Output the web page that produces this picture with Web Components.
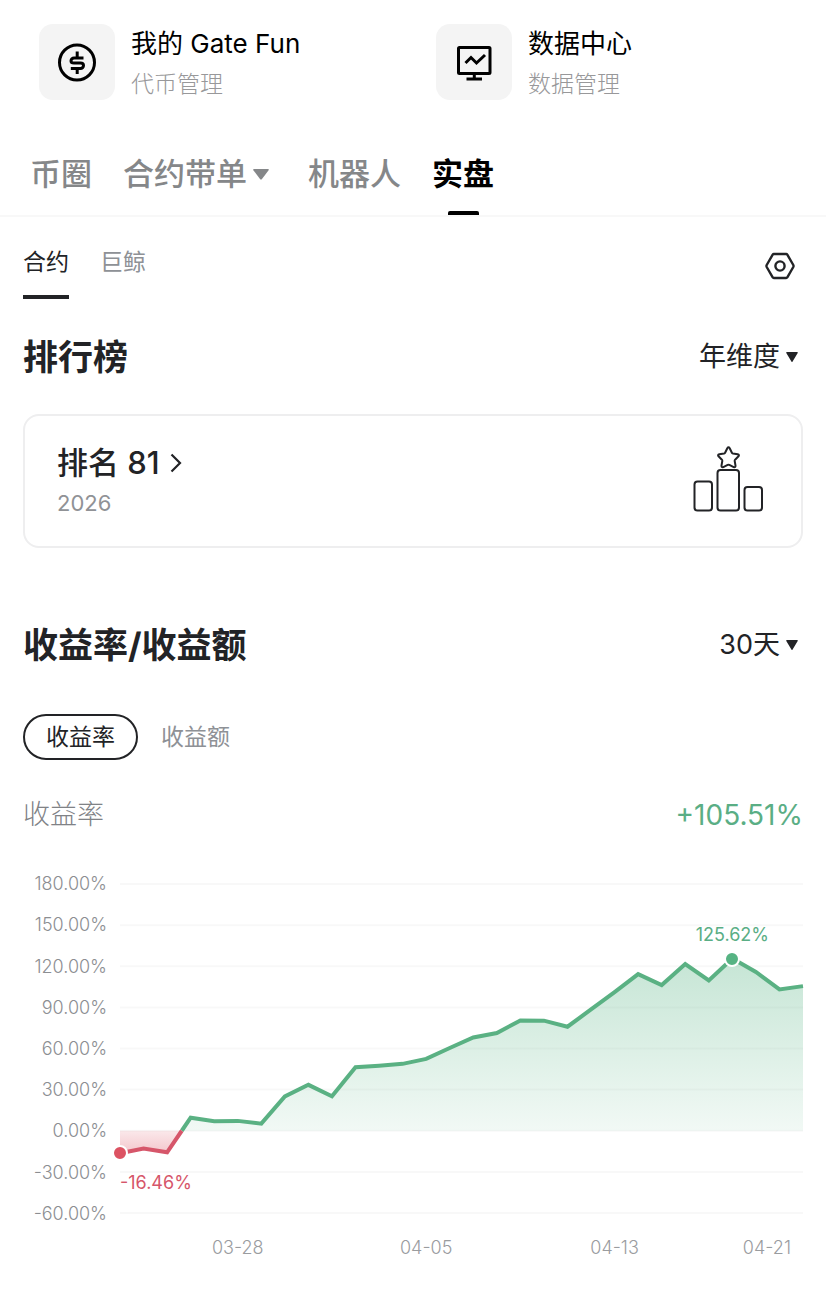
<!DOCTYPE html>
<html lang="zh-CN">
    <head>

        <meta charset="utf-8">
        <meta name="viewport" content="width=device-width, initial-scale=1">
        <title>实盘</title>

        <style>
            body {
                margin: 0;
                background: #fff;
                color: #222326;
                font-family: Inter, "Noto Sans CJK SC", sans-serif;
            }
            .entries {
                display: grid;
                grid-template-columns: 1fr 1fr;
                gap: 16px;
                padding: 24px 24px 0;
            }
            .main-tabs {
                margin-top: 50px;
            }
            .content {
                padding: 29px 23px 40px;
            }
            .toolbar {
                display: flex;
                justify-content: space-between;
                align-items: flex-start;
                margin-bottom: 34px;
            }
            rank-card {
                margin: 33px 0 73px;
            }
            .pills {
                display: flex;
                margin-top: 45px;
            }
            .summary {
                margin: 35px 0 28px;
            }
        </style>

    </head>

    <body>

        <div class="entries">
            <entry-link>
                <svg slot="icon" width="40" height="40" viewBox="0 0 40 40" fill="none" stroke="#000" stroke-width="3">
                    <circle cx="20" cy="20.500" r="17.500"></circle>
                    <path d="M26.500 16H17a3 3 0 0 0-3 3c0 1.200 1 2 3 2h6.500c2 0 3 .8 3 2.500a3 3 0 0 1-3 3H13.800M20.200 9.500v6M20.200 26.500v5.500"></path>
                </svg>
                我的 Gate Fun
                <span slot="note">代币管理</span>
            </entry-link>
            <entry-link>
                <svg slot="icon" width="40" height="40" viewBox="0 0 40 40" fill="none" stroke="#000" stroke-width="3">
                    <rect x="4.500" y="5.500" width="31.500" height="26" rx="1"></rect>
                    <path d="M11.500 21l5.500-5.500 5.500 5.500 8.500-8M20.300 32v5M12.500 37h15.500"></path>
                </svg>
                数据中心
                <span slot="note">数据管理</span>
            </entry-link>
        </div>

        <main-tabs class="main-tabs">
            <main-tab>币圈</main-tab>
            <main-tab menu>合约带单</main-tab>
            <main-tab>机器人</main-tab>
            <main-tab selected>实盘</main-tab>
        </main-tabs>

        <div class="content">

            <div class="toolbar">
                <sub-tabs tab-values="合约, 巨鲸"></sub-tabs>
                <settings-button></settings-button>
            </div>

            <section-head option-values="年维度, 月维度, 周维度">排行榜</section-head>

            <rank-card>
                排名 81
                <span slot="note">2026</span>
            </rank-card>

            <section-head option-values="30天, 7天, 90天">收益率/收益额</section-head>

            <div class="pills">
                <pill-button selected>收益率</pill-button>
                <pill-button>收益额</pill-button>
            </div>

            <stat-row class="summary">
                收益率
                <span slot="value">+105.51%</span>
            </stat-row>

            <profit-chart
                values="-16.46,-13,-15.7,9.5,7,7.2,5.2,25,33.5,25.2,46.3,47.5,48.8,52.4,60.4,68,71.3,80.4,80.3,75.9,88.5,101.2,114.3,106.3,121.6,109.7,125.62,115.8,103.1,105.51"
                dates="03-28,04-05,04-13,04-21"
                max="180" min="-60" step="30"></profit-chart>

        </div>

        <!-- - - - - - - - - - - - - - - - - - - - - - - - - -->

        <template id="entry-link-template">
            <a href="#">
                <span class="icon"><slot name="icon"></slot></span>
                <span class="text">
                    <span class="title"><slot></slot></span>
                    <span class="note"><slot name="note"></slot></span>
                </span>
            </a>
            <style>
                :host {
                    display: block;
                }
                a {
                    display: flex;
                    gap: 16px;
                    padding: 0 15px;
                    color: #000;
                    text-decoration: none;
                }
                .icon {
                    display: flex;
                    align-items: center;
                    justify-content: center;
                    width: 76px;
                    height: 76px;
                    border-radius: 14px;
                    background: #f4f4f4;
                }
                .text {
                    display: flex;
                    flex-direction: column;
                    line-height: 40px;
                }
                .title {
                    font-size: 26px;
                }
                .note {
                    font-size: 23px;
                    font-weight: 300;
                    color: #98989a;
                }
            </style>
        </template>

        <template id="main-tabs-template">
            <nav><slot></slot></nav>
            <style>
                :host {
                    display: block;
                    border-bottom: 2px solid #f8f8f8;
                }
                nav {
                    display: flex;
                    gap: 31px;
                    padding: 0 30px;
                }
            </style>
        </template>

        <template id="main-tab-template">
            <button type="button">
                <span class="label">
                    <slot></slot>
                    <svg width="16" height="11" viewBox="0 0 16 11"><path d="M1 0h14q1.500 0 .6 1.200L9 10q-1 1-2 0L.4 1.200Q-.5 0 1 0z" fill="#858789"></path></svg>
                </span>
                <span class="bar"></span>
            </button>
            <style>
                :host {
                    display: block;
                }
                button {
                    display: flex;
                    flex-direction: column;
                    align-items: center;
                    gap: 17px;
                    padding: 0;
                    border: none;
                    background: none;
                    font: inherit;
                    font-size: 31px;
                    font-weight: 500;
                    line-height: 40px;
                    color: #858789;
                    cursor: pointer;
                }
                .label {
                    display: flex;
                    align-items: center;
                }
                svg {
                    display: none;
                    margin: 0 8px 0 6px;
                }
                .bar {
                    width: 31px;
                    height: 4px;
                    border-radius: 2px 2px 0 0;
                }
                :host([menu]) svg {
                    display: block;
                }
                :host([selected]) button {
                    color: #000;
                    font-weight: 700;
                }
                :host([selected]) .bar {
                    background: #000;
                }
            </style>
        </template>

        <template id="sub-tabs-template">
            <nav></nav>
            <style>
                :host {
                    display: block;
                }
                nav {
                    display: flex;
                    gap: 31px;
                }
                button {
                    padding: 0 0 17px;
                    border: none;
                    border-bottom: 4px solid transparent;
                    background: none;
                    font: inherit;
                    font-size: 23px;
                    line-height: 32px;
                    color: #8e9196;
                    cursor: pointer;
                }
                button.selected {
                    border-color: #222326;
                    color: #222326;
                }
            </style>
        </template>

        <template id="settings-button-template">
            <button type="button" aria-label="设置">
                <svg width="32" height="32" viewBox="0 0 32 32" fill="none" stroke="#222326" stroke-width="2.400" stroke-linejoin="round">
                    <path d="M9.800 4h12.400q.7 0 1.100.6l6 10.400q.5 1 0 2l-6 10.400q-.4.6-1.100.6H9.800q-.7 0-1.100-.6l-6-10.400q-.5-1 0-2l6-10.400q.4-.6 1.100-.6z"></path>
                    <circle cx="16" cy="16" r="4.600"></circle>
                </svg>
            </button>
            <style>
                :host {
                    display: block;
                }
                button {
                    display: block;
                    padding: 4px 7px;
                    border: none;
                    background: none;
                    cursor: pointer;
                }
                svg {
                    display: block;
                }
            </style>
        </template>

        <template id="section-head-template">
            <h2><slot></slot></h2>
            <label>
                <select aria-label="时间范围"></select>
                <svg width="12" height="10" viewBox="0 0 12 10"><path d="M.8 0h10.400q1 0 .5 1L6.600 9.400q-.6 1-1.200 0L.3 1Q-.2 0 .8 0z" fill="#222326"></path></svg>
            </label>
            <style>
                :host {
                    display: flex;
                    justify-content: space-between;
                    align-items: center;
                }
                h2 {
                    margin: 0;
                    font-size: 35px;
                    font-weight: 700;
                    line-height: 48px;
                }
                label {
                    display: grid;
                    align-items: center;
                    justify-items: end;
                    padding-right: 5px;
                }
                select, svg {
                    grid-area: 1 / 1;
                }
                svg {
                    pointer-events: none;
                }
                select {
                    appearance: none;
                    field-sizing: content;
                    padding: 0 18px 0 0;
                    border: none;
                    background: none;
                    font: inherit;
                    font-size: 27px;
                    line-height: 40px;
                    color: inherit;
                    cursor: pointer;
                }
            </style>
        </template>

        <template id="rank-card-template">
            <a href="#">
                <span class="text">
                    <span class="title">
                        <slot></slot>
                        <svg width="12" height="20" viewBox="0 0 12 20" fill="none" stroke="#222326" stroke-width="2.200"><path d="M1.500 1.500L10 10l-8.500 8.500"></path></svg>
                    </span>
                    <span class="note"><slot name="note"></slot></span>
                </span>
                <svg class="podium" width="72" height="68" viewBox="0 0 72 68" fill="none" stroke="#222326" stroke-width="2" stroke-linejoin="round">
                    <path d="M34.300 3.200q1.200-2 2.400 0l2.200 4.500q.3.600 1 .8l4.800.8q2 .5.800 2l-3.400 3.500q-.5.500-.4 1.200l.8 4.700q.1 2-1.800 1.400l-4.400-2.200q-.8-.4-1.600 0l-4.400 2.200q-1.900.600-1.800-1.400l.8-4.700q.1-.7-.4-1.200L25.500 11.300q-1.200-1.500.8-2l4.800-.8q.7-.2 1-.8z"></path>
                    <rect x="1.500" y="36.500" width="17.500" height="29" rx="3"></rect>
                    <rect x="24.500" y="25" width="21.500" height="40.500" rx="3"></rect>
                    <rect x="51.500" y="42" width="17.500" height="23.500" rx="3"></rect>
                </svg>
            </a>
            <style>
                :host {
                    display: block;
                }
                a {
                    display: flex;
                    justify-content: space-between;
                    align-items: flex-start;
                    padding: 27px 36px 23px 32px;
                    border: 2px solid #eeeeef;
                    border-radius: 16px;
                    color: inherit;
                    text-decoration: none;
                }
                .text {
                    display: flex;
                    flex-direction: column;
                    line-height: 40px;
                }
                .title {
                    display: flex;
                    align-items: center;
                    gap: 10px;
                    font-size: 31px;
                    font-weight: 500;
                }
                .note {
                    font-size: 22px;
                    color: #909296;
                }
                .podium {
                    margin-top: 2px;
                }
            </style>
        </template>

        <template id="pill-button-template">
            <button type="button"><slot></slot></button>
            <style>
                :host {
                    display: block;
                }
                button {
                    padding: 0 21px;
                    border: 2px solid transparent;
                    border-radius: 23px;
                    background: none;
                    font: inherit;
                    font-size: 23px;
                    line-height: 42px;
                    color: #8e9196;
                    cursor: pointer;
                }
                :host([selected]) button {
                    border-color: #222326;
                    color: #222326;
                }
            </style>
        </template>

        <template id="stat-row-template">
            <span class="name"><slot></slot></span>
            <span class="value"><slot name="value"></slot></span>
            <style>
                :host {
                    display: flex;
                    justify-content: space-between;
                    font-size: 27px;
                    line-height: 40px;
                }
                .name {
                    font-weight: 300;
                    color: #808286;
                }
                .value {
                    font-size: 28px;
                    color: #5aae85;
                }
            </style>
        </template>

        <template id="profit-chart-template">
            <div class="y-axis"></div>
            <div class="plot">
                <svg preserveAspectRatio="none">
                    <defs>
                        <linearGradient id="gain" x1="0" y1="0" x2="0" y2="1">
                            <stop offset="0" stop-color="#56b383" stop-opacity=".34"></stop>
                            <stop offset="1" stop-color="#56b383" stop-opacity=".08"></stop>
                        </linearGradient>
                        <linearGradient id="loss" x1="0" y1="0" x2="0" y2="1">
                            <stop offset="0" stop-color="#dc4f60" stop-opacity=".13"></stop>
                            <stop offset="1" stop-color="#dc4f60" stop-opacity=".32"></stop>
                        </linearGradient>
                    </defs>
                    <g class="grid"></g>
                    <path class="gain-area" fill="url(#gain)"></path>
                    <path class="loss-area" fill="url(#loss)"></path>
                    <path class="line gain-line"></path>
                    <path class="line loss-line"></path>
                </svg>
                <span class="dot high"></span>
                <span class="tip high"></span>
                <span class="dot low"></span>
                <span class="tip low"></span>
            </div>
            <div class="x-axis"></div>
            <style>
                :host {
                    display: grid;
                    grid-template-columns: 84px 1fr;
                    grid-template-rows: 371px 28px;
                    column-gap: 13px;
                    font-size: 18px;
                    font-weight: 300;
                    color: #8c8e92;
                }
                .y-axis {
                    display: grid;
                    grid-auto-rows: 1fr;
                    align-items: center;
                    text-align: right;
                }
                .plot {
                    position: relative;
                    margin: 21px 0;
                }
                svg {
                    display: block;
                    width: 100%;
                    height: 100%;
                    overflow: visible;
                }
                .grid line {
                    stroke: #000;
                    stroke-opacity: .026;
                    stroke-width: 2px;
                    vector-effect: non-scaling-stroke;
                }
                .line {
                    fill: none;
                    stroke-width: 4px;
                    vector-effect: non-scaling-stroke;
                }
                .gain-line {
                    stroke: #5ab183;
                }
                .loss-line {
                    stroke: #d6566a;
                }
                /* the markers lie over the plot */
                .dot {
                    position: absolute;
                    width: 12px;
                    height: 12px;
                    border: 2px solid #fff;
                    border-radius: 50%;
                    transform: translate(-50%, -50%);
                }
                .dot.high {
                    background: #56b383;
                }
                .dot.low {
                    background: #dc5262;
                }
                .tip {
                    position: absolute;
                    line-height: 24px;
                    font-weight: 400;
                }
                .tip.high {
                    color: #5aae85;
                    transform: translate(-50%, -36px);
                }
                .tip.low {
                    color: #d6566a;
                    transform: translateY(18px);
                }
                .x-axis {
                    grid-column: 2;
                    display: grid;
                    grid-template-columns: 1fr 8fr 8fr 8fr 4fr;
                    line-height: 28px;
                    text-align: center;
                    color: #9a9c9f;
                }
                .x-axis span:first-child {
                    grid-column: 2;
                }
                .x-axis span:last-child {
                    padding-right: 12px;
                    text-align: right;
                }
            </style>
        </template>

        <script>

            class TemplateElement extends HTMLElement {

                constructor() {
                    super()

                    var shadow = this.shadow = this.attachShadow({mode: 'open'})
                    var template = document.getElementById(this.localName + '-template')
                    shadow.appendChild(template.content.cloneNode(true))
                }

            }

            class EntryLink extends TemplateElement {}
            class MainTabs extends TemplateElement {}
            class SettingsButton extends TemplateElement {}
            class RankCard extends TemplateElement {}
            class StatRow extends TemplateElement {}

            class MainTab extends TemplateElement {

                constructor() {
                    super()
                    this.addEventListener("click", () => selectOnly(this))
                }

            }

            class PillButton extends TemplateElement {

                constructor() {
                    super()
                    this.addEventListener("click", () => selectOnly(this))
                }

            }

            // moves the selected attribute to this node from its siblings
            function selectOnly(node) {
                Array.from(node.parentNode.children).forEach((sibling) => {
                    sibling.toggleAttribute('selected', sibling === node)
                })
            }

            class SubTabs extends TemplateElement {

                constructor() {
                    super()

                    var nav = this.nav = this.shadow.querySelector("nav")
                    this.getAttribute('tab-values').split(',').forEach((value, i) => {
                        var button = document.createElement('button')
                        button.type = 'button'
                        button.textContent = value.trim()
                        button.classList.toggle('selected', i === 0)
                        button.addEventListener("click", () => this.selectTab(button))
                        nav.appendChild(button)
                    })
                }

                selectTab(button) {
                    this.nav.querySelectorAll("button").forEach((node) => {
                        node.classList.toggle('selected', node === button)
                    })
                }

            }

            class SectionHead extends TemplateElement {

                constructor() {
                    super()

                    var select = this.shadow.querySelector("select")
                    this.getAttribute('option-values').split(',').forEach((value) => {
                        select.add(new Option(value.trim()))
                    })
                }

            }

            class ProfitChart extends TemplateElement {

                constructor() {
                    super()

                    this.values = this.getAttribute('values').split(',').map(Number)
                    this.max = Number(this.getAttribute('max'))
                    this.min = Number(this.getAttribute('min'))
                    this.step = Number(this.getAttribute('step'))

                    this.drawAxes()
                    this.drawLines()
                    this.placeMarker('high', Math.max(...this.values))
                    this.placeMarker('low', Math.min(...this.values))
                }

                drawAxes() {
                    var yAxis = this.shadow.querySelector(".y-axis")
                    var grid = this.shadow.querySelector(".grid")
                    var width = this.values.length - 1
                    for(var value = this.max; value >= this.min; value -= this.step) {
                        this.addLabel(yAxis, value.toFixed(2) + '%')
                        var line = document.createElementNS('http://www.w3.org/2000/svg', 'line')
                        line.setAttribute('x2', width)
                        line.setAttribute('y1', this.max - value)
                        line.setAttribute('y2', this.max - value)
                        grid.appendChild(line)
                    }

                    var xAxis = this.shadow.querySelector(".x-axis")
                    this.getAttribute('dates').split(',').forEach((date) => {
                        this.addLabel(xAxis, date)
                    })
                }

                addLabel(axis, text) {
                    var label = document.createElement('span')
                    label.textContent = text
                    axis.appendChild(label)
                }

                drawLines() {
                    var svg = this.shadow.querySelector("svg")
                    svg.setAttribute('viewBox', `0 0 ${this.values.length - 1} ${this.max - this.min}`)

                    // split the series where it crosses zero
                    var runs = []
                    var run = null
                    this.values.forEach((value, i) => {
                        var previous = this.values[i - 1]
                        if(!run || (value < 0) !== (previous < 0)) {
                            var next = {loss: value < 0, points: []}
                            if(run) {
                                var crossing = [i - 1 + previous / (previous - value), 0]
                                run.points.push(crossing)
                                next.points.push(crossing)
                            }
                            runs.push(run = next)
                        }
                        run.points.push([i, value])
                    })

                    this.drawRuns('gain', runs.filter((run) => !run.loss))
                    this.drawRuns('loss', runs.filter((run) => run.loss))
                }

                drawRuns(name, runs) {
                    var line = ''
                    var area = ''
                    runs.forEach(({points}) => {
                        var path = 'M' + points.map(([x, value]) => `${x} ${this.max - value}`).join('L')
                        line += path
                        area += `${path}V${this.max}H${points[0][0]}z`
                    })
                    this.shadow.querySelector(`.${name}-line`).setAttribute('d', line)
                    this.shadow.querySelector(`.${name}-area`).setAttribute('d', area)
                }

                placeMarker(name, value) {
                    var left = this.values.indexOf(value) / (this.values.length - 1) * 100
                    var top = (this.max - value) / (this.max - this.min) * 100
                    this.shadow.querySelectorAll(`.${name}`).forEach((node) => {
                        node.style.left = left + '%'
                        node.style.top = top + '%'
                    })
                    this.shadow.querySelector(`.tip.${name}`).textContent = value.toFixed(2) + '%'
                }

            }

            customElements.define('entry-link', EntryLink)
            customElements.define('main-tabs', MainTabs)
            customElements.define('main-tab', MainTab)
            customElements.define('sub-tabs', SubTabs)
            customElements.define('settings-button', SettingsButton)
            customElements.define('section-head', SectionHead)
            customElements.define('rank-card', RankCard)
            customElements.define('pill-button', PillButton)
            customElements.define('stat-row', StatRow)
            customElements.define('profit-chart', ProfitChart)

        </script>

    </body>
</html>
